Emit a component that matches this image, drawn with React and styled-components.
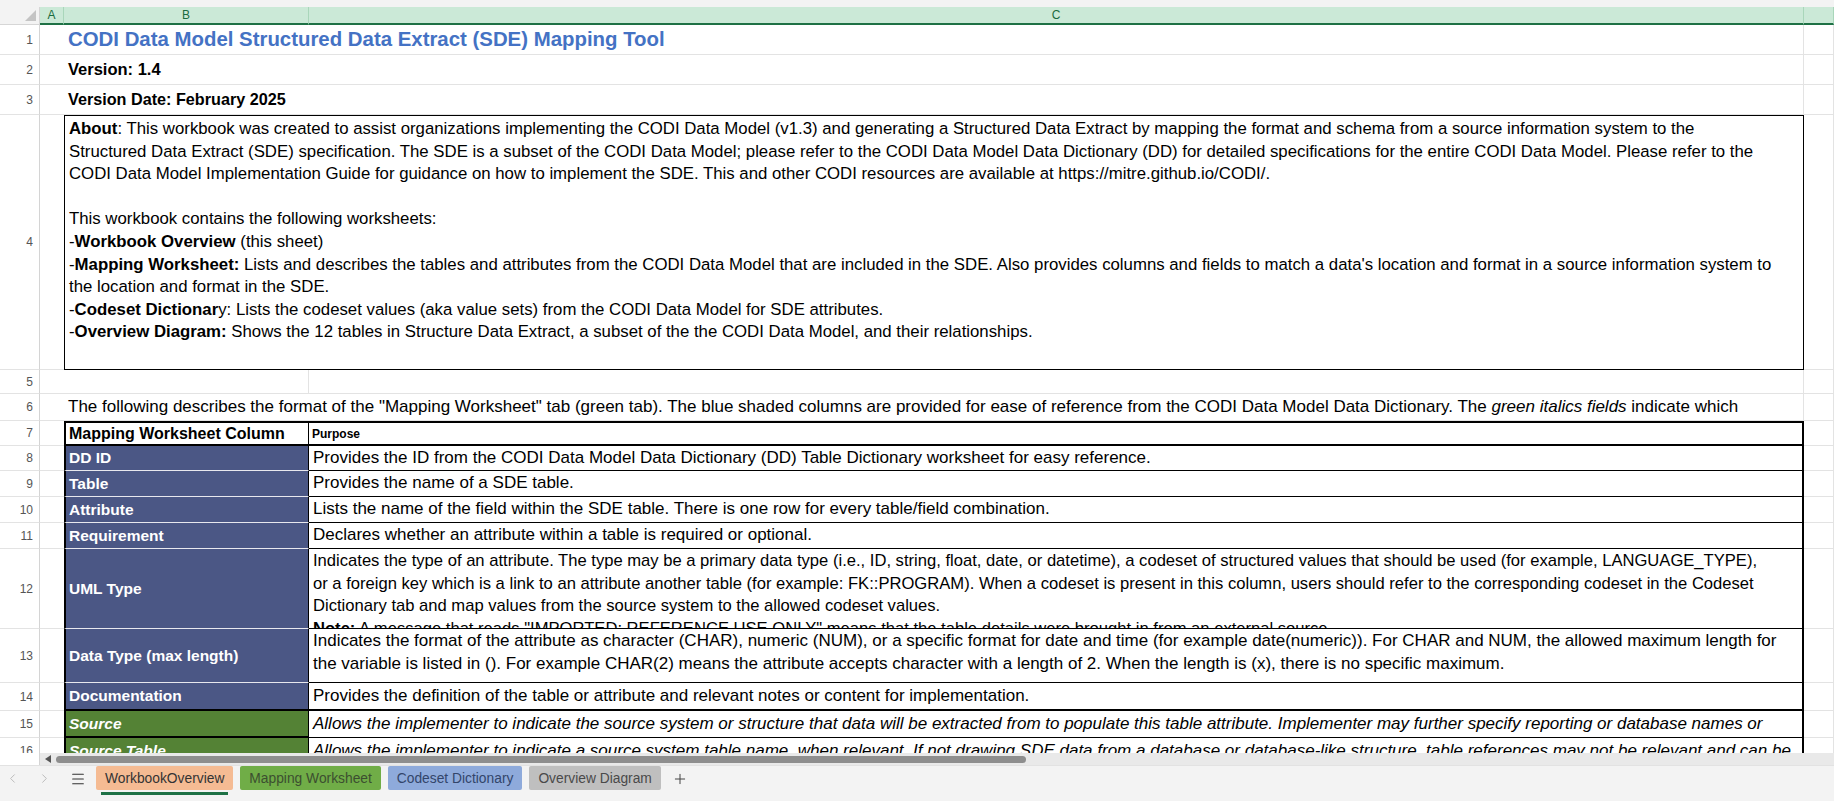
import React from "react";
import styled, { createGlobalStyle, css } from "styled-components";
import { ChevronLeft, ChevronRight, Menu, Plus } from "lucide-react";

const GlobalStyle = createGlobalStyle`
  html, body {
    margin: 0;
    padding: 0;
    overflow: hidden;
    background: #fff;
  }
  body {
    font-family: "Liberation Sans", Arial, sans-serif;
    color: #000;
  }
  * { box-sizing: border-box; }
`;

const COLS = "40px 24px 245px 1495px 30px";
const NAVY = "#4b5785";
const GREEN = "#548235";

const Page = styled.div`
  width: 1834px;
  height: 801px;
  display: flex;
  flex-direction: column;
  background: #fff;
  overflow: hidden;
`;

const TopStrip = styled.div`
  flex: none;
  height: 7px;
  background: #f3f3f3;
`;

const Sheet = styled.div`
  flex: 1;
  min-height: 0;
  overflow: hidden;
`;

const Row = styled.div`
  display: grid;
  grid-template-columns: ${COLS};
  height: ${(p) => p.$h}px;
`;

const Corner = styled.div`
  background: #f3f3f3;
  border-right: 1px solid #d6d6d6;
  border-bottom: 1px solid #d6d6d6;
  display: flex;
  align-items: flex-end;
  justify-content: flex-end;
  padding: 0 3px 3px 0;
`;

const ColHead = styled.div`
  background: #cbe9d7;
  border-bottom: 2px solid #1e7145;
  border-right: 1px solid #a9d6ba;
  color: #1b6b3f;
  font-size: 12px;
  display: flex;
  align-items: center;
  justify-content: center;
`;

const RowNum = styled.div`
  background: #fff;
  border-right: 1px solid #d4d4d4;
  border-bottom: 1px solid #e3e3e3;
  color: #555;
  font-size: 12px;
  display: flex;
  align-items: center;
  justify-content: flex-end;
  padding-right: 6px;
  overflow: hidden;
`;

const Cell = styled.div`
  border-bottom: 1px solid #e3e3e3;
  border-right: ${(p) => (p.$open ? "none" : "1px solid #e3e3e3")};
  overflow: hidden;
  white-space: nowrap;
`;

const Merged = styled.div`
  grid-column: span 2;
  border-bottom: 1px solid #e3e3e3;
  border-right: 1px solid #e3e3e3;
  padding-left: 4px;
  display: flex;
  align-items: center;
  white-space: nowrap;
  overflow: hidden;
  font-size: 17px;
`;

const Title = styled.span`
  color: #4472c4;
  font-weight: 700;
  font-size: 20.4px;
`;

const Strong = styled.span`
  font-weight: 700;
  font-size: ${(p) => (p.$size ? `${p.$size}px` : "inherit")};
`;

const AboutBox = styled.div`
  grid-column: span 2;
  border: 1px solid #000;
  padding: 2px 4px;
  font-size: 16.8px;
  line-height: 22.6px;
  overflow: hidden;
`;

const Line = styled.div`
  white-space: nowrap;
  height: 22.6px;
`;

const HeadB = styled.div`
  border: 2px solid #000;
  border-right: 1px solid #000;
  padding-left: 3px;
  font-weight: 700;
  font-size: 16px;
  display: flex;
  align-items: center;
  white-space: nowrap;
  overflow: hidden;
`;

const HeadC = styled.div`
  border: 2px solid #000;
  border-left: none;
  padding-left: 3px;
  font-weight: 700;
  font-size: 12px;
  display: flex;
  align-items: center;
`;

const Label = styled.div`
  background: ${(p) => (p.$tone === "green" ? GREEN : NAVY)};
  color: #fff;
  font-weight: 700;
  font-size: 15.5px;
  font-style: ${(p) => (p.$tone === "green" ? "italic" : "normal")};
  border-left: 2px solid #000;
  border-right: 1px solid #000;
  border-bottom: ${(p) =>
    p.$tone === "green" || p.$last ? "2px solid #000" : "1px solid #e8e8ee"};
  padding-left: 3px;
  display: flex;
  align-items: center;
  white-space: nowrap;
  overflow: hidden;
`;

const Desc = styled.div`
  border-right: 2px solid #000;
  border-bottom: ${(p) => (p.$thick ? "2px" : "1px")} solid #000;
  padding: ${(p) => (p.$top ? "1px" : "0")} 4px 0;
  font-size: ${(p) => p.$size || 17}px;
  line-height: 22.6px;
  font-style: ${(p) => (p.$italic ? "italic" : "normal")};
  display: flex;
  flex-direction: column;
  justify-content: ${(p) => (p.$top ? "flex-start" : "center")};
  overflow: hidden;
  white-space: nowrap;
`;

const ScrollRow = styled.div`
  flex: none;
  height: 12px;
  display: flex;
  background: #fff;
`;

const ScrollGap = styled.div`
  width: 40px;
  border-right: 1px solid #d4d4d4;
`;

const Track = styled.div`
  flex: 1;
  background: #e9e9e9;
  display: flex;
  align-items: center;
  padding-left: 5px;
  gap: 5px;
`;

const Thumb = styled.div`
  width: 970px;
  height: 7px;
  border-radius: 4px;
  background: #8e8e8e;
`;

const TabBar = styled.div`
  flex: none;
  height: 36px;
  background: #f3f3f3;
  border-top: 1px solid #e2e2e2;
  display: flex;
  align-items: flex-start;
`;

const NavBtn = styled.div`
  width: ${(p) => p.$w}px;
  height: 25px;
  display: flex;
  align-items: center;
  justify-content: center;
  color: ${(p) => p.$color};
`;

const Tabs = styled.div`
  display: flex;
  gap: 7px;
  margin-left: 3px;
`;

const Tab = styled.div`
  position: relative;
  height: 24px;
  padding: 0 9px;
  border-radius: 2px;
  background: ${(p) => p.$bg};
  color: ${(p) => p.$fg};
  font-size: 13.8px;
  display: flex;
  align-items: center;
  white-space: nowrap;
  ${(p) =>
    p.$active &&
    css`
      &::after {
        content: "";
        position: absolute;
        left: 5px;
        right: 5px;
        bottom: -5px;
        height: 3px;
        background: #1e7145;
      }
    `}
`;

const aboutLines = [
  [<Strong key="a">About</Strong>, ": This workbook was created to assist organizations implementing the CODI Data Model (v1.3) and generating a Structured Data Extract by mapping the format and schema from a source information system to the"],
  ["Structured Data Extract (SDE) specification. The SDE is a subset of the CODI Data Model; please refer to the CODI Data Model Data Dictionary (DD) for detailed specifications for the entire CODI Data Model. Please refer to the"],
  ["CODI Data Model Implementation Guide for guidance on how to implement the SDE. This and other CODI resources are available at https://mitre.github.io/CODI/."],
  ["\u00a0"],
  ["This workbook contains the following worksheets:"],
  ["-", <Strong key="b">Workbook Overview</Strong>, " (this sheet)"],
  ["-", <Strong key="c">Mapping Worksheet:</Strong>, " Lists and describes the tables and attributes from the CODI Data Model that are included in the SDE. Also provides columns and fields to match a data's location and format in a source information system to"],
  ["the location and format in the SDE."],
  ["-", <Strong key="d">Codeset Dictionar</Strong>, "y: Lists the codeset values (aka value sets) from the CODI Data Model for SDE attributes."],
  ["-", <Strong key="e">Overview Diagram:</Strong>, " Shows the 12 tables in Structure Data Extract, a subset of the the CODI Data Model, and their relationships."],
];

const tableRows = [
  { n: 8, h: 25, label: "DD ID", lines: ["Provides the ID from the CODI Data Model Data Dictionary (DD) Table Dictionary worksheet for easy reference."] },
  { n: 9, h: 26, label: "Table", lines: ["Provides the name of a SDE table."] },
  { n: 10, h: 26, label: "Attribute", lines: ["Lists the name of the field within the SDE table. There is one row for every table/field combination."] },
  { n: 11, h: 26, label: "Requirement", lines: ["Declares whether an attribute within a table is required or optional."] },
  {
    n: 12, h: 80, label: "UML Type", top: true, size: 16.6,
    lines: [
      "Indicates the type of an attribute. The type may be a primary data type (i.e., ID, string, float, date, or datetime), a codeset of structured values that should be used (for example, LANGUAGE_TYPE),",
      "or a foreign key which is a link to an attribute another table (for example: FK::PROGRAM).  When a codeset is present in this column, users should refer to the corresponding codeset in the Codeset",
      "Dictionary tab and map values from the source system to the allowed codeset values.",
      [<Strong key="n">Note:</Strong>, " A message that reads \"IMPORTED: REFERENCE USE ONLY\" means that the table details were brought in from an external source."],
    ],
  },
  {
    n: 13, h: 54, label: "Data Type (max length)", top: true,
    lines: [
      "Indicates the format of the attribute as character (CHAR), numeric (NUM), or a specific format for date and time (for example date(numeric)). For CHAR and NUM, the allowed maximum length for",
      "the variable is listed in (). For example CHAR(2) means the attribute accepts character with a length of 2. When the length is (x), there is no specific maximum.",
    ],
  },
  { n: 14, h: 28, label: "Documentation", last: true, thick: true, lines: ["Provides the definition of the table or attribute and relevant notes or content for implementation."] },
  { n: 15, h: 27, label: "Source", tone: "green", italic: true, lines: ["Allows the implementer to indicate the source system or structure that data will be extracted from to populate this table attribute. Implementer may further specify reporting or database names or"] },
  { n: 16, h: 27, label: "Source Table", tone: "green", italic: true, lines: ["Allows the implementer to indicate a source system table name, when relevant. If not drawing SDE data from a database or database-like structure, table references may not be relevant and can be"] },
];

const tabs = [
  { name: "WorkbookOverview", bg: "#f5bb93", fg: "#333", active: true },
  { name: "Mapping Worksheet", bg: "#70ad47", fg: "#3c4f30" },
  { name: "Codeset Dictionary", bg: "#8eaadb", fg: "#33456a" },
  { name: "Overview Diagram", bg: "#bfbfbf", fg: "#4a4a4a" },
];

function PlainRow({ n, h, children }) {
  return (
    <Row $h={h}>
      <RowNum>{n}</RowNum>
      <Cell $open />
      {children}
      <Cell />
    </Row>
  );
}

export default function App() {
  return (
    <Page>
      <GlobalStyle />
      <TopStrip />
      <Sheet>
        <Row $h={18}>
          <Corner>
            <svg width="11" height="11" viewBox="0 0 11 11">
              <polygon points="11,0 11,11 0,11" fill="#c4c4c4" />
            </svg>
          </Corner>
          <ColHead>A</ColHead>
          <ColHead>B</ColHead>
          <ColHead>C</ColHead>
          <ColHead />
        </Row>

        <PlainRow n={1} h={30}>
          <Merged>
            <Title>CODI Data Model Structured Data Extract (SDE) Mapping Tool</Title>
          </Merged>
        </PlainRow>
        <PlainRow n={2} h={30}>
          <Merged>
            <Strong $size={16.5}>Version: 1.4</Strong>
          </Merged>
        </PlainRow>
        <PlainRow n={3} h={30}>
          <Merged>
            <Strong $size={16.2}>Version Date: February 2025</Strong>
          </Merged>
        </PlainRow>
        <PlainRow n={4} h={255}>
          <AboutBox>
            {aboutLines.map((parts, i) => (
              <Line key={i}>{parts}</Line>
            ))}
          </AboutBox>
        </PlainRow>
        <PlainRow n={5} h={24}>
          <Cell />
          <Cell />
        </PlainRow>
        <PlainRow n={6} h={27}>
          <Merged>
            <span>
              The following describes the format of the "Mapping Worksheet" tab (green tab). The blue shaded columns are provided for ease of reference from the CODI Data Model Data Dictionary. The <i>green italics fields</i> indicate which
            </span>
          </Merged>
        </PlainRow>
        <PlainRow n={7} h={25}>
          <HeadB>Mapping Worksheet Column</HeadB>
          <HeadC>Purpose</HeadC>
        </PlainRow>
        {tableRows.map((r) => (
          <PlainRow key={r.n} n={r.n} h={r.h}>
            <Label $tone={r.tone} $last={r.last}>
              {r.label}
            </Label>
            <Desc $top={r.top} $italic={r.italic} $thick={r.thick} $size={r.size}>
              {r.lines.map((l, i) => (
                <Line key={i}>{l}</Line>
              ))}
            </Desc>
          </PlainRow>
        ))}
      </Sheet>

      <ScrollRow>
        <ScrollGap />
        <Track>
          <svg width="6" height="8" viewBox="0 0 6 8">
            <polygon points="6,0 6,8 0,4" fill="#555" />
          </svg>
          <Thumb />
        </Track>
      </ScrollRow>

      <TabBar>
        <NavBtn $w={25} $color="#b8b8b8">
          <ChevronLeft size={15} strokeWidth={1.5} />
        </NavBtn>
        <NavBtn $w={38} $color="#b8b8b8">
          <ChevronRight size={15} strokeWidth={1.5} />
        </NavBtn>
        <NavBtn $w={30} $color="#333">
          <Menu size={16} strokeWidth={1.6} />
        </NavBtn>
        <Tabs>
          {tabs.map((t) => (
            <Tab key={t.name} $bg={t.bg} $fg={t.fg} $active={t.active}>
              {t.name}
            </Tab>
          ))}
        </Tabs>
        <NavBtn $w={38} $color="#444">
          <Plus size={16} strokeWidth={1.5} />
        </NavBtn>
      </TabBar>
    </Page>
  );
}
